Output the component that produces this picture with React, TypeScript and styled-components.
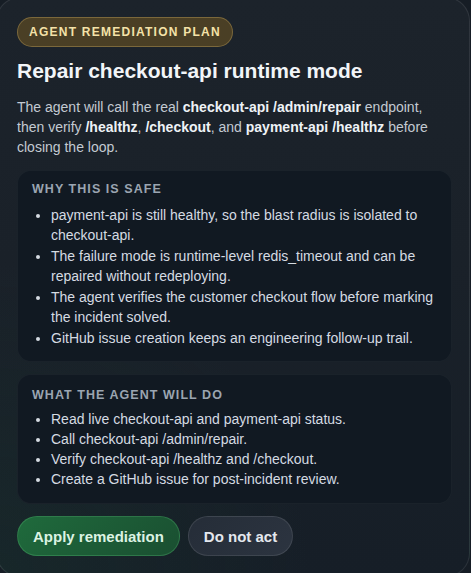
import React from 'react';
import styled, { createGlobalStyle } from 'styled-components';

const GlobalStyle = createGlobalStyle`
  html, body {
    margin: 0;
    padding: 0;
    background: #161d25;
    overflow: hidden;
  }
  body {
    font-family: 'Liberation Sans', Arial, sans-serif;
  }
`;

const safeItems = [
  'payment-api is still healthy, so the blast radius is isolated to checkout-api.',
  'The failure mode is runtime-level redis_timeout and can be repaired without redeploying.',
  'The agent verifies the customer checkout flow before marking the incident solved.',
  'GitHub issue creation keeps an engineering follow-up trail.',
];

const steps = [
  'Read live checkout-api and payment-api status.',
  'Call checkout-api /admin/repair.',
  'Verify checkout-api /healthz and /checkout.',
  'Create a GitHub issue for post-incident review.',
];

const App: React.FC = () => {
  return (
    <>
      <GlobalStyle />
      <Card>
        <Badge>Agent remediation plan</Badge>
        <Title>Repair checkout-api runtime mode</Title>
        <Lead>
          The agent will call the real <b>checkout-api /admin/repair</b> endpoint, then verify{' '}
          <b>/healthz</b>, <b>/checkout</b>, and <b>payment-api /healthz</b> before closing the loop.
        </Lead>

        {/* 안전한 이유 */}
        <Section>
          <SectionTitle>Why this is safe</SectionTitle>
          <List>
            {safeItems.map((item) => (
              <li key={item}>{item}</li>
            ))}
          </List>
        </Section>

        {/* 에이전트 단계 */}
        <Section tight>
          <SectionTitle>What the agent will do</SectionTitle>
          <List tight>
            {steps.map((item) => (
              <li key={item}>{item}</li>
            ))}
          </List>
        </Section>

        <Actions>
          <Button variant="primary">Apply remediation</Button>
          <Button>Do not act</Button>
        </Actions>
      </Card>
    </>
  );
};

const Card = styled.div`
  box-sizing: border-box;
  width: 474px;
  min-height: 580px;
  margin: -3px 0 0 -4px;
  padding: 19px 17px 20px 20px;
  border-radius: 24px;
  border: 1px solid rgba(255, 255, 255, 0.09);
  background:
    radial-gradient(circle at 0% 100%, rgba(30, 80, 55, 0.18), rgba(30, 80, 55, 0) 42%),
    linear-gradient(180deg, #1c232b 0%, #1a2129 45%, #161e27 100%);
  display: flex;
  flex-direction: column;
  align-items: flex-start;
  color: #e9edf2;
`;

const Badge = styled.div`
  box-sizing: border-box;
  height: 30px;
  padding: 0 11px;
  display: flex;
  align-items: center;
  border-radius: 999px;
  background: #4a3f25;
  border: 1px solid rgba(214, 180, 100, 0.35);
  color: #f4e2a8;
  font-size: 12px;
  font-weight: 700;
  letter-spacing: 1.25px;
  text-transform: uppercase;
`;

const Title = styled.h1`
  margin: 10px 0 0;
  font-size: 21px;
  line-height: 28px;
  font-weight: 700;
  color: #f2f5f8;
`;

const Lead = styled.p`
  margin: 12px 0 0;
  font-size: 14px;
  line-height: 20px;
  color: #c3cad2;

  b {
    color: #eef2f6;
    font-weight: 700;
  }
`;

const Section = styled.section<{ tight?: boolean }>`
  box-sizing: border-box;
  width: 100%;
  margin-top: ${(p) => (p.tight ? '12px' : '13px')};
  padding: ${(p) => (p.tight ? '13px 14px 14px' : '11px 14px 13px')};
  border-radius: 14px;
  background: #111922;
  border: 1px solid rgba(255, 255, 255, 0.04);
`;

const SectionTitle = styled.h2`
  margin: 0;
  font-size: 12.5px;
  line-height: 14px;
  font-weight: 700;
  letter-spacing: 1.05px;
  text-transform: uppercase;
  color: #9ba5b1;
`;

const List = styled.ul<{ tight?: boolean }>`
  margin: ${(p) => (p.tight ? '7px' : '9px')} 0 0;
  padding-left: 19px;
  font-size: 14px;
  line-height: 20px;
  color: #d5dbe2;

  li + li {
    margin-top: ${(p) => (p.tight ? '0' : '1px')};
  }
`;

const Actions = styled.div`
  display: flex;
  gap: 8px;
  margin-top: 12px;
`;

const Button = styled.button<{ variant?: 'primary' }>`
  height: 40px;
  padding: 0 15px;
  border-radius: 999px;
  font-family: 'Liberation Sans', Arial, sans-serif;
  font-size: 15px;
  font-weight: 700;
  cursor: pointer;
  color: ${(p) => (p.variant === 'primary' ? '#dcf3e3' : '#e4e8ee')};
  background: ${(p) =>
    p.variant === 'primary'
      ? 'linear-gradient(135deg, #1f6a3c, #1a4f31)'
      : 'linear-gradient(135deg, #252d38, #2c3440)'};
  border: 1px solid
    ${(p) => (p.variant === 'primary' ? 'rgba(90, 190, 120, 0.3)' : 'rgba(255, 255, 255, 0.1)')};
`;

export default App;
